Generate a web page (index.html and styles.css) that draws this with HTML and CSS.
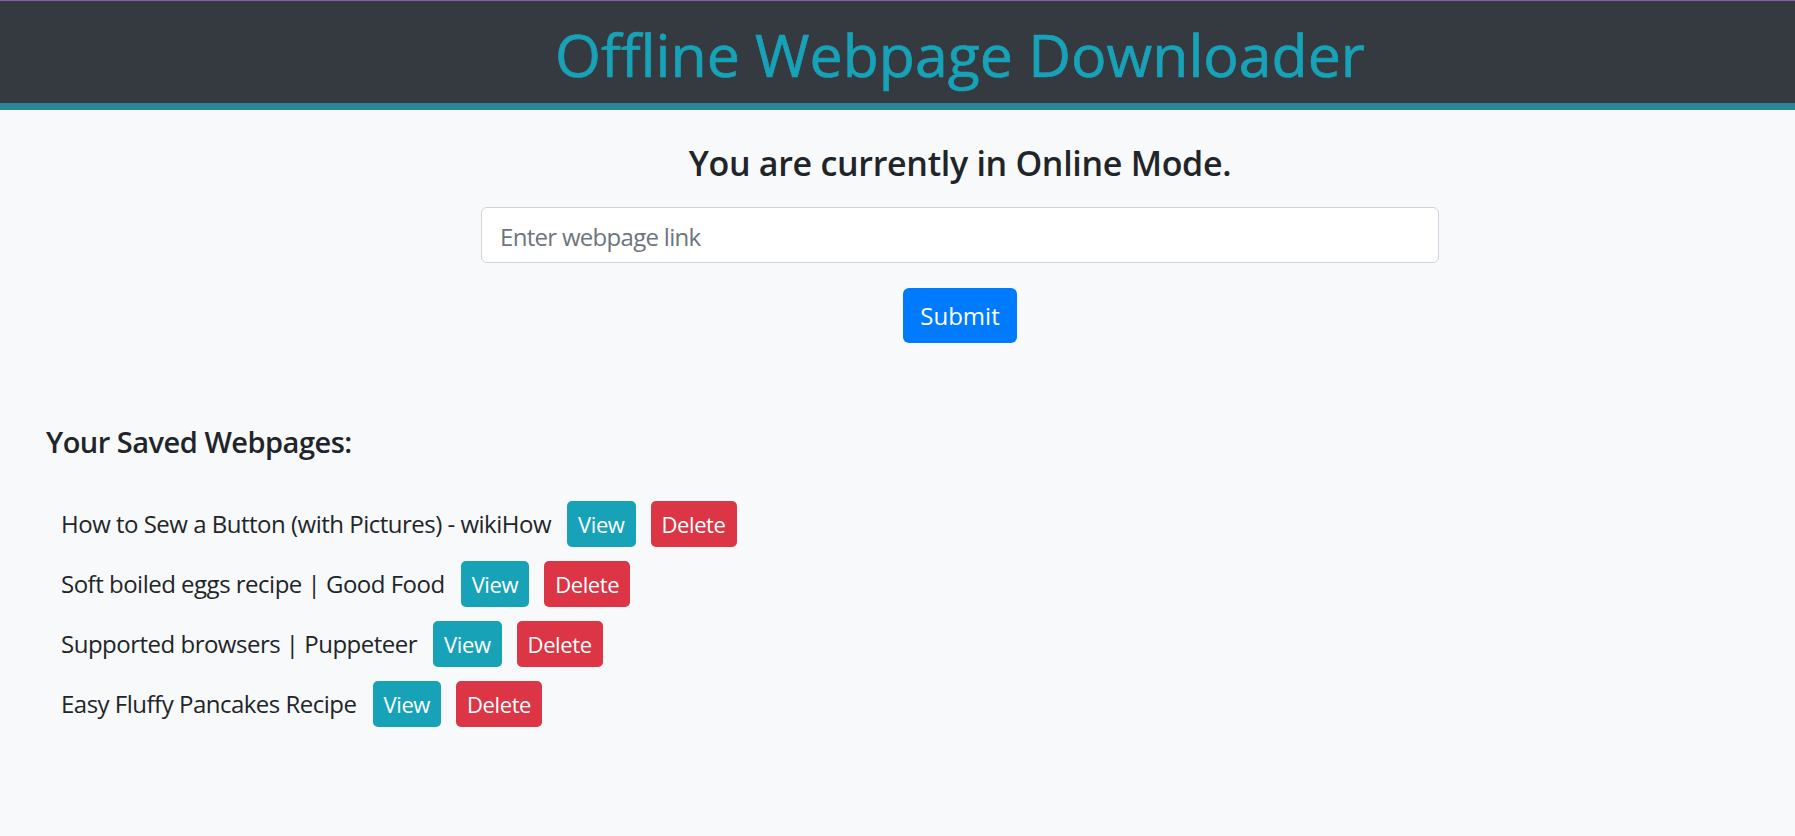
FILE: index.html
```html
<!DOCTYPE html>
<html lang="en">
<head>
<meta charset="utf-8">
<title>Offline Webpage Downloader</title>
<link rel="stylesheet" href="styles.css">
</head>
<body>
<div class="page">
  <header class="header">
    <h1 class="title">Offline Webpage Downloader</h1>
  </header>
  <main class="main">
    <section class="download">
      <h3 class="mode">You are currently in Online Mode.</h3>
      <input class="link-input" type="text" placeholder="Enter webpage link">
      <button class="btn btn-primary btn-submit" type="button">Submit</button>
    </section>
    <section class="saved">
      <h4 class="saved-title">Your Saved Webpages:</h4>
      <ul class="saved-list">
        <li class="saved-item"><span class="saved-name">How to Sew a Button (with Pictures) - wikiHow</span><button class="btn btn-info" type="button">View</button><button class="btn btn-danger" type="button">Delete</button></li>
        <li class="saved-item"><span class="saved-name">Soft boiled eggs recipe | Good Food</span><button class="btn btn-info" type="button">View</button><button class="btn btn-danger" type="button">Delete</button></li>
        <li class="saved-item"><span class="saved-name">Supported browsers | Puppeteer</span><button class="btn btn-info" type="button">View</button><button class="btn btn-danger" type="button">Delete</button></li>
        <li class="saved-item"><span class="saved-name">Easy Fluffy Pancakes Recipe</span><button class="btn btn-info" type="button">View</button><button class="btn btn-danger" type="button">Delete</button></li>
      </ul>
    </section>
  </main>
</div>
</body>
</html>
```

FILE: styles.css
```css
html, body {
  margin: 0;
  padding: 0;
  overflow: hidden;
}
body {
  background: #f8f9fa;
  color: #212529;
  font-family: "Open Sans", "Noto Sans", sans-serif;
}
.page {
  width: 1920px;
}
.header {
  height: 102px;
  background: #343a40;
  border-top: 1px solid #8f5aa8;
  border-bottom: 7px solid #2b869c;
  display: flex;
  align-items: center;
  justify-content: center;
}
.title {
  margin: 0;
  font-size: 59px;
  font-weight: 400;
  line-height: 1.2;
  color: #17a2b8;
  -webkit-text-stroke: 0.7px #17a2b8;
  padding-top: 4px;
}
.main {
  display: flex;
  flex-direction: column;
}
.download {
  display: flex;
  flex-direction: column;
  align-items: center;
}
.mode {
  margin: 33px 0 0;
  font-size: 34px;
  font-weight: 600;
  letter-spacing: -0.3px;
  line-height: 1.2;
}
.link-input {
  margin-top: 23px;
  box-sizing: border-box;
  width: 958px;
  height: 56px;
  padding: 4px 18px 0;
  border: 1px solid #ced4da;
  border-radius: 6px;
  background: #fff;
  font-family: inherit;
  font-size: 24px;
  letter-spacing: -0.7px;
  color: #495057;
}
.link-input::placeholder {
  color: #6c757d;
}
.btn {
  border: 0;
  border-radius: 5px;
  font-family: inherit;
  color: #fff;
  cursor: pointer;
}
.btn-primary {
  background: #007bff;
}
.btn-submit {
  margin-top: 25px;
  width: 114px;
  height: 55px;
  padding-top: 2px;
  border-radius: 6px;
  font-size: 24px;
}
.saved {
  padding-left: 46px;
}
.saved-title {
  margin: 82px 0 0;
  font-size: 29px;
  font-weight: 600;
  letter-spacing: -0.5px;
  line-height: 1.2;
}
.saved-list {
  list-style: none;
  margin: 41px 0 0;
  padding: 0 0 0 15px;
  display: flex;
  flex-direction: column;
  gap: 14px;
}
.saved-item {
  display: flex;
  align-items: center;
  gap: 15px;
}
.saved-name {
  font-size: 24px;
  letter-spacing: -0.5px;
  line-height: 1.5;
  margin-right: 1px;
}
.btn-info,
.btn-danger {
  height: 46px;
  padding: 0 11px;
  font-size: 22px;
  letter-spacing: -0.4px;
}
.btn-info {
  background: #17a2b8;
}
.btn-danger {
  background: #dc3545;
}
```
